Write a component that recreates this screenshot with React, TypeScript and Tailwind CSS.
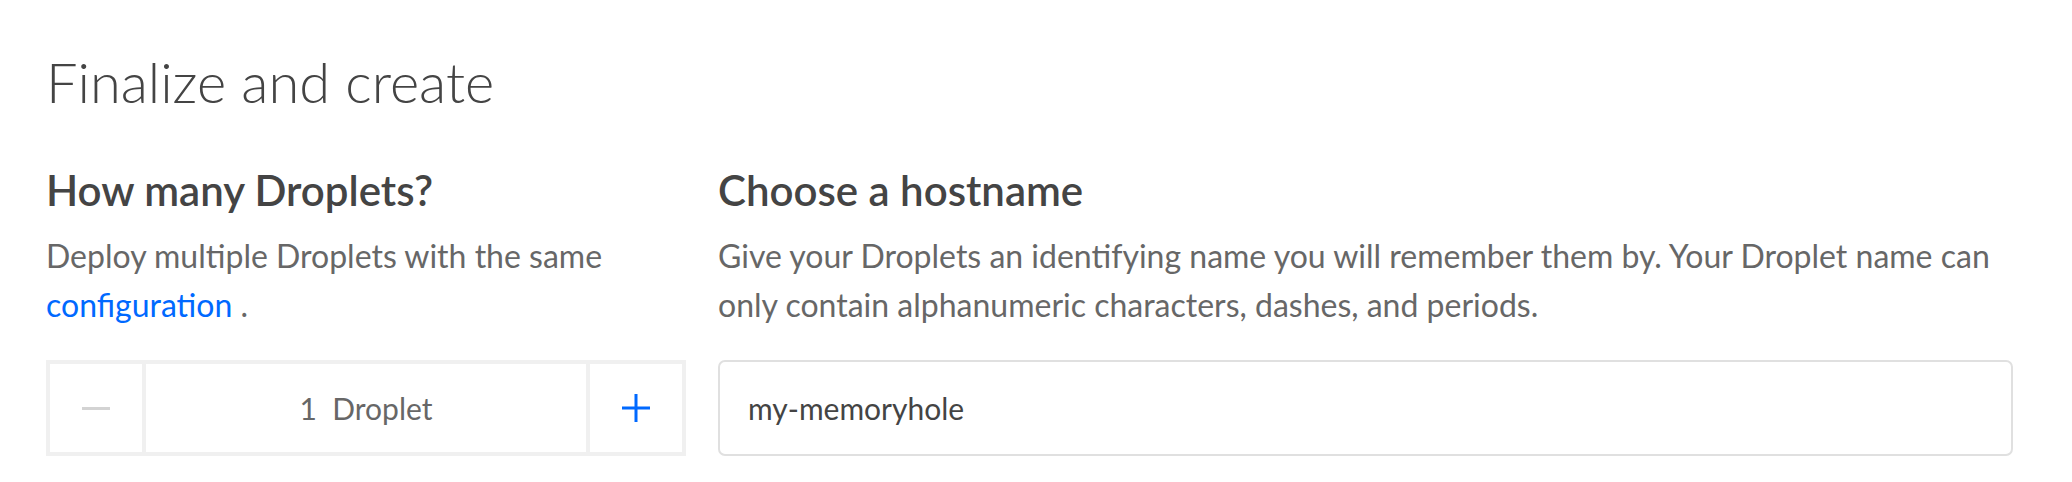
import React from "react";

function Stepper() {
  return (
    <div className="flex h-[96px] w-[640px] border-4 border-[#f0f0f0] bg-white">
      <button className="flex w-[96px] shrink-0 items-center justify-center border-r-4 border-[#f0f0f0]">
        <span className="block h-[3px] w-[28px] bg-[#d3d3d3]" />
      </button>
      <div className="flex flex-1 items-center justify-center text-[30px] text-[#676767]">
        1&nbsp; Droplet
      </div>
      <button className="flex w-[96px] shrink-0 items-center justify-center border-l-4 border-[#f0f0f0]">
        <svg width="28" height="28" viewBox="0 0 28 28">
          <path d="M14 0v28M0 14h28" stroke="#0069ff" strokeWidth="3" />
        </svg>
      </button>
    </div>
  );
}

export default function App() {
  return (
    <div
      className="h-[482px] w-[2072px] bg-white pl-[46px] pr-[59px] pt-[54px]"
      style={{ fontFamily: "Lato, 'Open Sans', sans-serif" }}
    >
      <h1 className="text-[56px] font-light leading-none text-[#444]">
        Finalize and create
      </h1>
      <div className="mt-[59px] flex gap-[32px]">
        <div className="w-[640px]">
          <h2 className="text-[42px] font-semibold leading-none text-[#444]">
            How many Droplets?
          </h2>
          <p className="mt-[20px] text-[32px] leading-[49px] text-[#676767]">
            Deploy multiple Droplets with the same{" "}
            <a className="text-[#0069ff]">configuration</a> .
          </p>
          <div className="mt-[31px]">
            <Stepper />
          </div>
        </div>
        <div className="flex-1">
          <h2 className="text-[42px] font-semibold leading-none text-[#444]">
            Choose a hostname
          </h2>
          <p className="mt-[20px] text-[32px] leading-[49px] text-[#676767]">
            Give your Droplets an identifying name you will remember them by.
            Your Droplet name can only contain alphanumeric characters, dashes,
            and periods.
          </p>
          <div className="mt-[31px] flex h-[96px] items-center rounded-[7px] border-2 border-[#e0e0e0] px-[28px] text-[30px] text-[#444]">
            my-memoryhole
          </div>
        </div>
      </div>
    </div>
  );
}
